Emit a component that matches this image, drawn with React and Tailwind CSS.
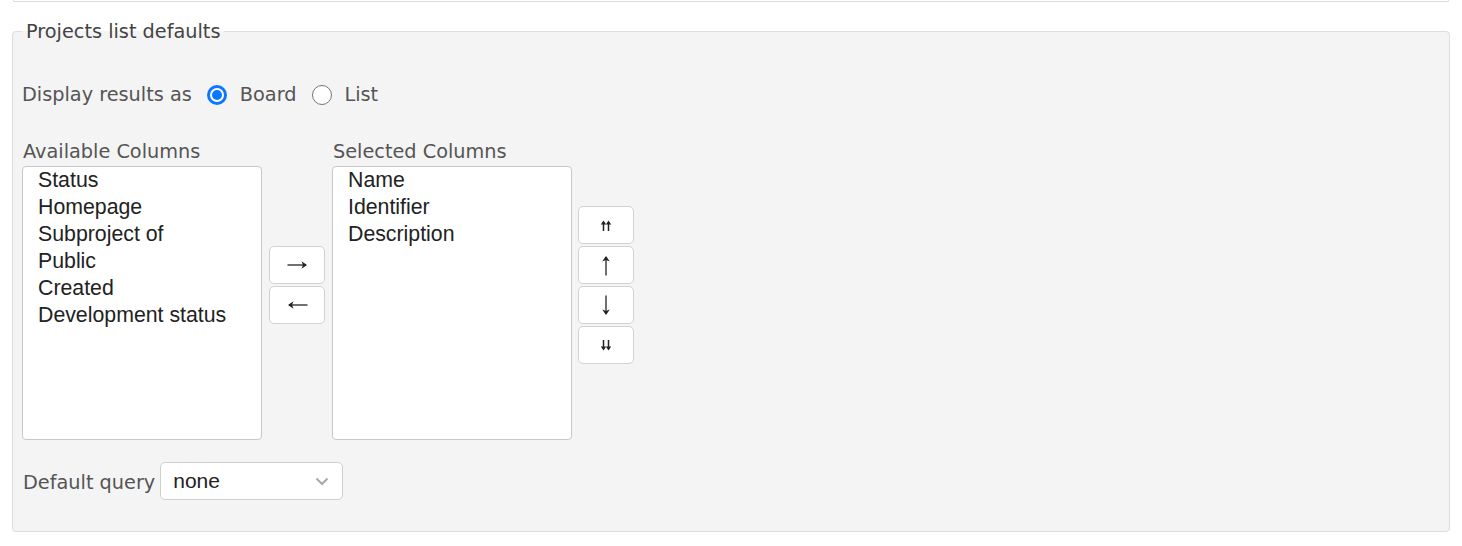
import React from "react";

const label = "text-[19.3px] leading-[24px] text-[#555] font-['DejaVu_Sans',sans-serif]";
const opt = "text-[21.3px] leading-[27px] text-[#222] font-['Liberation_Sans',Arial,sans-serif] pl-[15px]";
const btn =
  "w-[56px] h-[38px] flex items-center justify-center bg-white border border-[#d2d2d2] rounded-[5px] text-[#222]";

function Radio({ checked }) {
  return checked ? (
    <span className="flex w-[20px] h-[20px] rounded-full bg-[#0b76ff] items-center justify-center">
      <span className="flex w-[14px] h-[14px] rounded-full bg-white items-center justify-center">
        <span className="block w-[10px] h-[10px] rounded-full bg-[#0b76ff]" />
      </span>
    </span>
  ) : (
    <span className="block w-[20px] h-[20px] rounded-full bg-white border border-[#767676]" />
  );
}

function ListBox({ items }) {
  return (
    <div className="w-[240px] h-[274px] bg-white border border-[#c8c8c8] rounded-[4px] overflow-hidden">
      {items.map((t) => (
        <div key={t} className={opt}>
          {t}
        </div>
      ))}
    </div>
  );
}

const Horiz = ({ left }) => (
  <svg width="21" height="10" viewBox="0 0 21 10" style={left ? { transform: "scaleX(-1)" } : undefined}>
    <path d="M0.5 5 H19" stroke="#222" strokeWidth="1.3" fill="none" />
    <path d="M14.5 1.2 L20 5 L14.5 8.8 L16 5 Z" fill="#222" />
  </svg>
);

const Vert = ({ down }) => (
  <svg width="10" height="21" viewBox="0 0 10 21" style={down ? { transform: "scaleY(-1)" } : undefined}>
    <path d="M5 2 V20.5" stroke="#222" strokeWidth="1.3" fill="none" />
    <path d="M1.2 6.5 L5 1 L8.8 6.5 L5 5 Z" fill="#222" />
  </svg>
);

const Double = ({ down }) => (
  <svg width="12" height="11" viewBox="0 0 12 11" style={down ? { transform: "scaleY(-1)" } : undefined}>
    <path d="M3.5 2 V11 M8.5 2 V11" stroke="#222" strokeWidth="1.5" fill="none" />
    <path d="M0.8 4.5 L3.5 0.5 L6.2 4.5 Z M5.8 4.5 L8.5 0.5 L11.2 4.5 Z" fill="#222" />
  </svg>
);

export default function App() {
  return (
    <div className="bg-white w-[1462px] h-[546px] font-['DejaVu_Sans',sans-serif]">
      <div className="mx-[13px] h-[2px] border-x border-b border-[#dcdcdc] rounded-b-[4px]" />
      <fieldset className="mx-[12px] mt-[16px] border border-[#dedede] rounded-[4px] bg-[#f4f4f4] px-[9px] pb-[31px]">
        <legend className="px-[4px] pt-[2px] text-[19.3px] leading-[24px] text-[#444]">
          Projects list defaults
        </legend>

        <div className="mt-[32px] h-[38px] flex items-center">
          <span className={label}>Display results as</span>
          <span className="ml-[15px] flex">
            <Radio checked />
          </span>
          <span className={label + " ml-[13px]"}>Board</span>
          <span className="ml-[16px] flex">
            <Radio />
          </span>
          <span className={label + " ml-[12px]"}>List</span>
        </div>

        <div className="mt-[24px] flex items-start">
          <div className="flex flex-col">
            <span className={label + " ml-[1px] pt-[2px]"}>Available Columns</span>
            <div className="mt-[2px]">
              <ListBox
                items={[
                  "Status",
                  "Homepage",
                  "Subproject of",
                  "Public",
                  "Created",
                  "Development status",
                ]}
              />
            </div>
          </div>
          <div className="ml-[7px] pt-[108px] flex flex-col gap-[2px]">
            <button className={btn}>
              <Horiz />
            </button>
            <button className={btn}>
              <Horiz left />
            </button>
          </div>
          <div className="ml-[7px] flex flex-col">
            <span className={label + " ml-[1px] pt-[2px]"}>Selected Columns</span>
            <div className="mt-[2px]">
              <ListBox items={["Name", "Identifier", "Description"]} />
            </div>
          </div>
          <div className="ml-[6px] pt-[68px] flex flex-col gap-[2px]">
            <button className={btn}>
              <Double />
            </button>
            <button className={btn}>
              <Vert />
            </button>
            <button className={btn}>
              <Vert down />
            </button>
            <button className={btn}>
              <Double down />
            </button>
          </div>
        </div>

        <div className="mt-[22px] h-[38px] flex items-center">
          <span className={label + " ml-[1px] pt-[4px]"}>Default query</span>
          <div className="ml-[5px] w-[183px] h-[38px] bg-white border border-[#cfcfcf] rounded-[5px] flex items-center justify-between pl-[12px] pr-[12px]">
            <span className="text-[21px] text-[#222] font-['Liberation_Sans',Arial,sans-serif]">none</span>
            <svg width="14" height="9" viewBox="0 0 14 9" className="mr-[1px]">
              <path d="M1.5 1.5 L7 7 L12.5 1.5" fill="none" stroke="#a8a8a8" strokeWidth="2" />
            </svg>
          </div>
        </div>
      </fieldset>
    </div>
  );
}
